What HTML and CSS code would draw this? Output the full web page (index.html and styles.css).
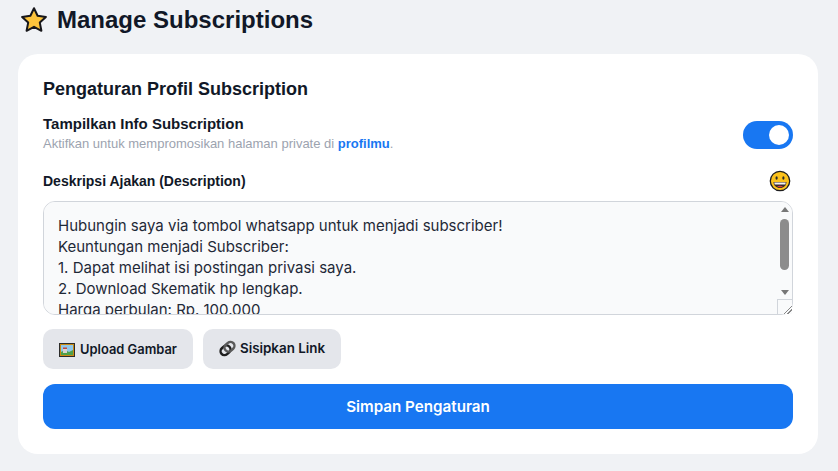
FILE: index.html
```html
<!DOCTYPE html>
<html lang="id">
<head>
  <meta charset="UTF-8">
  <title>Manage Subscriptions</title>
  <link rel="stylesheet" href="styles.css">
</head>
<body>

  <!-- Page title -->
  <h1 class="page-title">
    <svg class="title-icon" viewBox="0 0 28 28">
      <path d="M14 2.200l3.600 7.600 8.300 1.100-6.100 5.700 1.600 8.200-7.400-4-7.400 4 1.600-8.200-6.100-5.700 8.300-1.100z" fill="#fdc43c" stroke="#17171b" stroke-width="2" stroke-linejoin="round"/>
    </svg>
    Manage Subscriptions
  </h1>

  <div class="card">
    <h2>Pengaturan Profil Subscription</h2>

    <div class="toggle-row">
      <div>
        <div class="toggle-label">Tampilkan Info Subscription</div>
        <div class="toggle-hint">Aktifkan untuk mempromosikan halaman private di <a href="#">profilmu</a>.</div>
      </div>
      <span class="toggle"><span class="knob"></span></span>
    </div>

    <div class="desc-head">
      <label for="desc">Deskripsi Ajakan (Description)</label>
      <svg class="emoji" viewBox="0 0 22 22">
        <circle cx="11" cy="11" r="9.700" fill="#fcc21b" stroke="#1d1d1f" stroke-width="1.300"/>
        <ellipse cx="7.600" cy="8" rx="1.100" ry="1.700" fill="#2a2a2a"/>
        <ellipse cx="14.400" cy="8" rx="1.100" ry="1.700" fill="#2a2a2a"/>
        <path d="M4.500 12h13c0 3.400-2.800 6-6.500 6s-6.500-2.600-6.500-6z" fill="#3a2a2a"/>
        <path d="M5.200 12.400h11.600l-.5 2H5.700z" fill="#f2f2f2"/>
        <path d="M8 16.500c1.500-1 4.500-1 6 0-1.500 1-4.500 1-6 0z" fill="#e0433a"/>
      </svg>
    </div>

    <div class="desc-box">
      <textarea id="desc" class="desc-input">Hubungin saya via tombol whatsapp untuk menjadi subscriber!
Keuntungan menjadi Subscriber:
1. Dapat melihat isi postingan privasi saya.
2. Download Skematik hp lengkap.
Harga perbulan: Rp. 100.000
Hubungi saya sekarang juga ya.
Terima kasih banyak.
Salam hangat.</textarea>
      <!-- scrollbar drawn over the textarea -->
      <div class="scrollbar">
        <span class="arrow arrow-up"></span>
        <span class="thumb"></span>
        <span class="arrow arrow-down"></span>
      </div>
    </div>

    <div class="tool-row">
      <button class="tool-btn" type="button">
        <svg class="tool-icon" viewBox="0 0 16 14">
          <rect x="0.500" y="0.500" width="15" height="13" fill="#c98a12" stroke="#2b2b2b"/>
          <rect x="2" y="2" width="12" height="10" fill="#8fc7ea"/>
          <path d="M2 12V9l4-2 4 2 4-2v5z" fill="#4fa04a"/>
          <rect x="4" y="5" width="4" height="5" fill="#d9d4cf"/>
          <rect x="4" y="4.500" width="4" height="1.500" fill="#c0453f"/>
        </svg>
        Upload Gambar
      </button>
      <button class="tool-btn link-btn" type="button">
        <svg class="link-icon" viewBox="0 0 16 16">
          <g fill="none" stroke-width="2.300" transform="rotate(-42 8 8)">
            <rect x="0.500" y="4.300" width="10" height="7.400" rx="3.700" stroke="#1f1f1f"/>
            <rect x="5.500" y="4.300" width="10" height="7.400" rx="3.700" stroke="#5a5a5a"/>
          </g>
        </svg>
        Sisipkan Link
      </button>
    </div>

    <button class="save-btn" type="button">Simpan Pengaturan</button>
  </div>

</body>
</html>
```
FILE: styles.css
```css
html, body {
  height: 471px;
  overflow: hidden;
}
body {
  margin: 0;
  padding: 0 20px 0 18px;
  background-color: #f0f2f5;
  font-family: 'Liberation Sans', Arial, sans-serif;
  color: #111827;
}
.page-title {
  display: flex;
  align-items: center;
  gap: 9px;
  height: 40px;
  margin: 0 0 14px;
  padding-left: 2px;
  font-size: 24px;
  font-weight: 700;
}
.title-icon {
  width: 28px;
  height: 28px;
}
.card {
  background: #fff;
  border-radius: 20px;
  padding: 24px 25px 25px;
  height: 400px;
  box-sizing: border-box;
}
h2 {
  margin: 0 0 15px;
  font-size: 18px;
  line-height: 22px;
  font-weight: 700;
}
.toggle-row {
  display: flex;
  justify-content: space-between;
  align-items: center;
  margin-bottom: 15px;
}
.toggle-label {
  margin-bottom: 1px;
  font-size: 15px;
  line-height: 18px;
  font-weight: 700;
}
.toggle-hint {
  font-size: 13px;
  line-height: 20px;
  color: #9ca3af;
}
.toggle-hint a {
  color: #1877f2;
  font-weight: 700;
  text-decoration: none;
}
.toggle {
  display: flex;
  justify-content: flex-end;
  align-items: center;
  width: 50px;
  height: 28px;
  padding-right: 4px;
  box-sizing: border-box;
  background-color: #1877f2;
  border-radius: 14px;
}
.knob {
  width: 20px;
  height: 20px;
  background: #fff;
  border-radius: 50%;
}
.desc-head {
  display: flex;
  justify-content: space-between;
  align-items: center;
  height: 24px;
  margin-bottom: 8px;
}
.desc-head label {
  font-size: 14px;
  font-weight: 700;
}
.emoji {
  width: 22px;
  height: 22px;
  margin-right: 2px;
}
.desc-box {
  position: relative;
}
.desc-input {
  display: block;
  width: 100%;
  height: 114px;
  box-sizing: border-box;
  padding: 13px 14px;
  border: 1px solid #d1d5db;
  border-radius: 12px;
  background-color: #f9fafb;
  font-family: 'Inter', 'Open Sans', sans-serif;
  font-size: 15px;
  line-height: 21px;
  color: #1f2937;
  outline: none;
  overflow-y: scroll;
  resize: vertical;
}
.desc-input::-webkit-resizer {
  background-color: #f9fafb;
  border-top: 1px solid #d1d5db;
  border-left: 1px solid #d1d5db;
  background-image: linear-gradient(135deg, transparent 68%, #888 68%, #888 72%, transparent 72%, transparent 82%, #888 82%, #888 86%, transparent 86%);
}
.scrollbar {
  position: absolute;
  top: 1px;
  right: 1px;
  bottom: 16px;
  width: 15px;
  display: flex;
  flex-direction: column;
  align-items: center;
  padding: 5px 0 4px;
  box-sizing: border-box;
}
.thumb {
  width: 9px;
  height: 51px;
  margin: 7px 0 auto;
  background-color: #8c8c8c;
  border-radius: 5px;
}
.arrow {
  width: 0;
  height: 0;
  border-left: 4.500px solid transparent;
  border-right: 4.500px solid transparent;
}
.arrow-up {
  border-bottom: 5px solid #777;
}
.arrow-down {
  border-top: 5px solid #777;
}
.tool-row {
  display: flex;
  gap: 10px;
  margin-top: 14px;
}
.tool-btn {
  display: flex;
  align-items: center;
  gap: 5px;
  height: 40px;
  padding: 1px 16px 0;
  border: none;
  border-radius: 10px;
  background-color: #e4e6eb;
  font-family: 'Inter', 'Open Sans', sans-serif;
  font-size: 12.900px;
  font-weight: 600;
  color: #111827;
}
.link-btn {
  gap: 4px;
  padding: 0 16px 2px;
  font-size: 13.400px;
}
.tool-icon {
  width: 16px;
  height: 14px;
}
.link-icon {
  width: 17px;
  height: 17px;
}
.save-btn {
  display: block;
  width: 100%;
  height: 45px;
  margin-top: 15px;
  border: none;
  border-radius: 12px;
  background-color: #1877f2;
  font-family: 'Inter', 'Open Sans', sans-serif;
  font-size: 15.200px;
  font-weight: 600;
  color: #fff;
}
```
